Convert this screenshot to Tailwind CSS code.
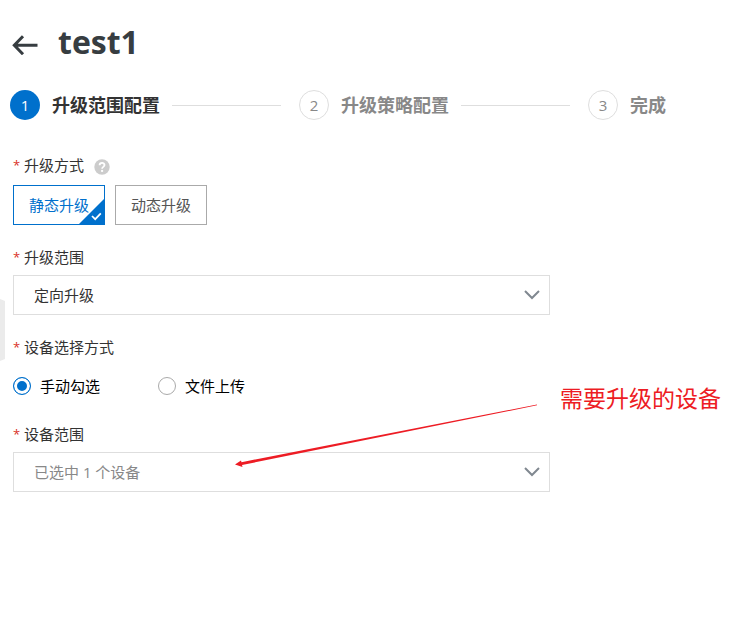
<!DOCTYPE html>
<html lang="zh-CN">
<head>
<meta charset="utf-8">
<meta name="viewport" content="width=device-width, initial-scale=1">
<title>test1</title>
<script src="https://cdn.jsdelivr.net/npm/@tailwindcss/browser@4"></script>
</head>
<body class="relative min-h-screen bg-white font-['Open_Sans','Noto_Sans_CJK_SC',sans-serif] text-[15px] leading-5 text-[#333]">
  <header class="flex items-center gap-5 px-3 pt-5">
    <a href="#" aria-label="返回" class="mt-[6px]">
      <svg class="h-5 w-[26px]" viewBox="0 0 26 20" fill="none" stroke="#373d41" stroke-width="3"><path d="M25.500 10.200H2.500M11 1.200L2.300 10.200L11 19.200"/></svg>
    </a>
    <h1 class="text-[32px] font-bold leading-[44px] text-[#373d41]">test1</h1>
  </header>

  <ol class="mt-[26px] flex pl-[10px] text-[18px] font-bold leading-[30px] text-[#888]">
    <li class="flex flex-1 items-center gap-3 pr-[18px] text-[#333]" aria-current="step">
      <span class="flex size-[30px] shrink-0 items-center justify-center rounded-full bg-[#0070cc] text-[15px] font-normal text-white">1</span>
      <span class="shrink-0">升级范围配置</span>
      <span class="h-px flex-1 bg-[#dedede]"></span>
    </li>
    <li class="flex flex-1 items-center gap-3 pr-[18px]">
      <span class="flex size-[30px] shrink-0 items-center justify-center rounded-full border border-[#dedede] text-[15px] font-normal">2</span>
      <span class="shrink-0">升级策略配置</span>
      <span class="h-px flex-1 bg-[#dedede]"></span>
    </li>
    <li class="flex w-[158px] items-center gap-3">
      <span class="flex size-[30px] shrink-0 items-center justify-center rounded-full border border-[#dedede] text-[15px] font-normal">3</span>
      <span>完成</span>
    </li>
  </ol>

  <form class="mt-[35px] max-w-[563px] px-[13px]">
    <div role="group" aria-labelledby="mode-label">
      <div class="flex items-center gap-[10px]">
        <span id="mode-label" class="flex gap-1"><span class="w-[7px] text-[13px] text-[#d93026]">*</span>升级方式</span>
        <button type="button" aria-label="帮助" class="mt-1 size-4">
          <svg class="size-4" viewBox="0 0 16 16"><circle cx="8" cy="8" r="7.700" fill="#ccc"/><path d="M5.600 6.300C5.600 3.200 10.500 3.200 10.500 6.100C10.500 7.800 8.100 7.900 8.100 9.700" fill="none" stroke="#fff" stroke-width="1.800"/><rect x="7.100" y="10.900" width="2" height="2" fill="#fff"/></svg>
        </button>
      </div>
      <div class="mt-[10px] flex gap-[10px]">
        <button type="button" aria-pressed="true" class="relative h-10 border border-[#0070cc] px-[15px] text-[#0070cc]">静态升级
          <svg class="absolute -right-px -bottom-px size-[27px]" viewBox="0 0 27 27" aria-hidden="true"><path d="M27 0V27H0Z" fill="#0070cc"/><path d="M14 18L17.200 21.200L22.800 15.400" fill="none" stroke="#fff" stroke-width="1.700"/></svg>
        </button>
        <button type="button" aria-pressed="false" class="h-10 border border-[#aaa] px-[15px] text-[#555]">动态升级</button>
      </div>
    </div>

    <div class="mt-[22px]">
      <label for="scope" class="flex gap-1"><span class="w-[7px] text-[13px] text-[#d93026]">*</span>升级范围</label>
      <div class="relative mt-2">
        <select id="scope" class="h-10 w-full appearance-none border border-[#dedede] bg-white px-5"><option>定向升级</option></select>
        <svg class="pointer-events-none absolute top-[15px] right-[10px] h-[10px] w-4" viewBox="0 0 16 10" fill="none" stroke="#808890" stroke-width="2" aria-hidden="true"><path d="M1 1L8 8L15 1"/></svg>
      </div>
    </div>

    <fieldset class="mt-[22px]">
      <legend class="flex gap-1"><span class="w-[7px] text-[13px] text-[#d93026]">*</span>设备选择方式</legend>
      <div class="mt-[19px] flex gap-[58px] text-black">
        <label class="flex items-center gap-[9px]"><input type="radio" name="pick" checked class="size-[18px] appearance-none rounded-full border border-[#aaa] checked:border-[#0070cc] checked:bg-[#0070cc] checked:shadow-[inset_0_0_0_3px_#fff]">手动勾选</label>
        <label class="flex items-center gap-[9px]"><input type="radio" name="pick" class="size-[18px] appearance-none rounded-full border border-[#aaa] checked:border-[#0070cc] checked:bg-[#0070cc] checked:shadow-[inset_0_0_0_3px_#fff]">文件上传</label>
      </div>
    </fieldset>

    <div class="mt-7">
      <label for="devices" class="flex gap-1"><span class="w-[7px] text-[13px] text-[#d93026]">*</span>设备范围</label>
      <div class="relative mt-2">
        <select id="devices" class="h-10 w-full appearance-none border border-[#dedede] bg-white px-5 text-[#888]"><option>已选中 1 个设备</option></select>
        <svg class="pointer-events-none absolute top-[15px] right-[10px] h-[10px] w-4" viewBox="0 0 16 10" fill="none" stroke="#808890" stroke-width="2" aria-hidden="true"><path d="M1 1L8 8L15 1"/></svg>
      </div>
    </div>
  </form>

  <svg class="absolute top-[299px] left-0 h-[62px] w-[5px]" viewBox="0 0 5 62" aria-hidden="true"><path d="M0 0L5 2V60L0 62Z" fill="#ebebeb"/></svg>

  <svg class="pointer-events-none absolute top-[400px] left-[230px] h-[72px] w-[310px]" viewBox="0 0 310 72" fill="#ed1c24" aria-hidden="true"><path d="M5 64.500L11 60.500L11.500 62.200L307 4.500L307 5.300L12 65L12.500 67Z"/></svg>
  <p class="absolute top-[382px] left-[560px] font-['KaiTi','Noto_Sans_CJK_SC',serif] text-[23px] leading-[30px] whitespace-nowrap text-[#ed1c24]">需要升级的设备</p>
</body>
</html>
